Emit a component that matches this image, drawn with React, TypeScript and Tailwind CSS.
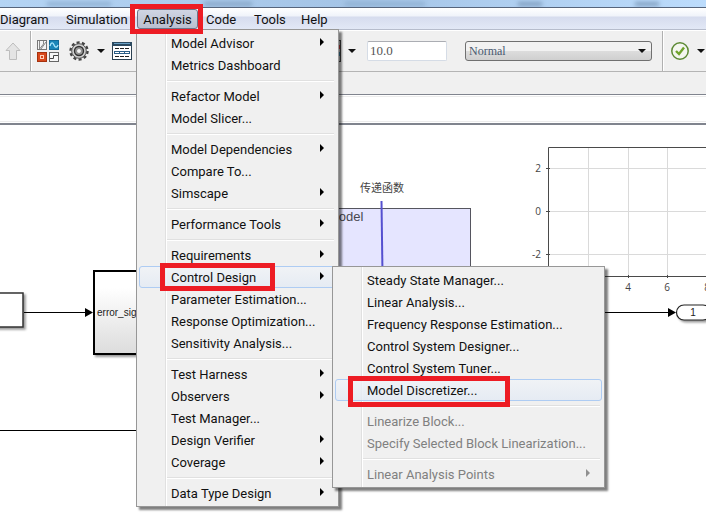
import type { ReactNode } from "react";

type Entry = {
  label?: string;
  arrow?: boolean;
  disabled?: boolean;
  active?: boolean;
  mark?: ReactNode;
  submenu?: Entry[];
};

const SEPARATOR: Entry = {};

const controlDesign: Entry[] = [
  { label: "Steady State Manager..." },
  { label: "Linear Analysis..." },
  { label: "Frequency Response Estimation..." },
  { label: "Control System Designer..." },
  { label: "Control System Tuner..." },
  {
    label: "Model Discretizer...",
    active: true,
    mark: <Mark className="left-[13px] -top-[3px] h-[31px] w-[162px]" />,
  },
  SEPARATOR,
  { label: "Linearize Block...", disabled: true },
  { label: "Specify Selected Block Linearization...", disabled: true },
  SEPARATOR,
  { label: "Linear Analysis Points", disabled: true, arrow: true },
];

const analysis: Entry[] = [
  { label: "Model Advisor", arrow: true },
  { label: "Metrics Dashboard" },
  SEPARATOR,
  { label: "Refactor Model", arrow: true },
  { label: "Model Slicer..." },
  SEPARATOR,
  { label: "Model Dependencies", arrow: true },
  { label: "Compare To..." },
  { label: "Simscape", arrow: true },
  SEPARATOR,
  { label: "Performance Tools", arrow: true },
  SEPARATOR,
  { label: "Requirements", arrow: true },
  {
    label: "Control Design",
    arrow: true,
    active: true,
    mark: <Mark className="left-[21px] -top-[3px] h-[28px] w-[115px]" />,
    submenu: controlDesign,
  },
  { label: "Parameter Estimation..." },
  { label: "Response Optimization..." },
  { label: "Sensitivity Analysis..." },
  SEPARATOR,
  { label: "Test Harness", arrow: true },
  { label: "Observers", arrow: true },
  { label: "Test Manager..." },
  { label: "Design Verifier", arrow: true },
  { label: "Coverage", arrow: true },
  SEPARATOR,
  { label: "Data Type Design", arrow: true },
];

/* Red frame that calls out one step of the click path. */
function Mark({ className }: { className: string }) {
  return (
    <span
      aria-hidden="true"
      className={`pointer-events-none absolute z-30 border-5 border-[#ed1c24] ${className}`}
    />
  );
}

function Menu({ entries, className, label }: { entries: Entry[]; className: string; label: string }) {
  return (
    <ul
      aria-label={label}
      className={`absolute border border-[#979797] bg-[#f0f0f0] bg-[linear-gradient(90deg,transparent_28px,#e0e0e0_28px,#e0e0e0_29px,#ffffff_29px,#ffffff_30px,transparent_30px)] p-[2px] shadow-[3px_3px_2px_rgba(0,0,0,0.5)] ${className}`}
    >
      {entries.map((e, i) =>
        e.label ? (
          <li key={i} className="relative">
            <button
              type="button"
              disabled={e.disabled}
              className={`flex h-[22px] w-full items-center rounded-[3px] border pt-[2px] pl-[31px] pr-[11px] text-left text-[13px] leading-4 whitespace-nowrap ${
                e.active
                  ? "border-[#aeccf3] bg-linear-to-b from-[#f0f3f7]/80 to-[#e3eaf4]/80"
                  : "border-transparent"
              } ${e.disabled ? "text-[#808080]" : "text-[#111111]"}`}
            >
              <span className="flex-1">{e.label}</span>
              {e.arrow && (
                <svg width="4" height="8" viewBox="0 0 4 8" className="-mt-1">
                  <path d="M0 0L4 4L0 8Z" fill={e.disabled ? "#909090" : "#000"} />
                </svg>
              )}
            </button>
            {e.submenu && (
              <Menu
                entries={e.submenu}
                label={e.label}
                className="left-[193px] top-0 z-20 w-[273px]"
              />
            )}
            {e.mark}
          </li>
        ) : (
          <li key={i} role="separator" className="flex h-[9px] items-center pl-7 pr-[2px]">
            <span className="h-[2px] flex-1 border-t border-[#e0e0e0] bg-white" />
          </li>
        ),
      )}
    </ul>
  );
}

function MenuBar() {
  const tab = "h-5 px-2 pt-[2px] text-left text-[13px] leading-[18px] text-[#111111]";
  return (
    <nav className="relative z-20 flex h-[22px] items-end border-b border-[#b6bccc] bg-[linear-gradient(#ffffff_0,#f0f3fa_8px,#d6dcee_9px,#e2e8f6_21px)]">
      <button type="button" className={`${tab} -ml-2 w-[66px]`}>Diagram</button>
      <button type="button" className={`${tab} w-[79px]`}>Simulation</button>
      <div className="relative w-[61px]">
        <button
          type="button"
          className="block h-5 w-full rounded-[3px] border border-[#6c7488] bg-linear-to-b from-[#d0d5e3] to-[#b9bfd0] pt-[2px] text-[13px] leading-4 text-[#111111]"
        >
          Analysis
        </button>
        <Menu entries={analysis} label="Analysis" className="-left-px top-5 w-[203px]" />
        <Mark className="-left-[7px] -top-[5px] h-[30px] w-[73px]" />
      </div>
      <button type="button" className={`${tab} w-[48px]`}>Code</button>
      <button type="button" className={`${tab} w-[47px]`}>Tools</button>
      <button type="button" className={`${tab} w-[44px]`}>Help</button>
    </nav>
  );
}

function Caret() {
  return (
    <svg width="8" height="4" viewBox="0 0 8 4" className="shrink-0">
      <path d="M0 0H8L4 4Z" fill="#111" />
    </svg>
  );
}

function LibraryIcon() {
  return (
    <svg width="22" height="22" viewBox="0 0 22 22">
      <rect x="0.5" y="0.5" width="9" height="9" fill="#f4f4f4" stroke="#777" />
      <path d="M2.5 1V9M2.5 9L6.5 4V1M4 9L9 2" fill="none" stroke="#888" />
      <rect x="12.5" y="0.5" width="9" height="9" fill="#1c86b8" stroke="#126a98" />
      <path d="M13 6C14 2 16 2 17 5S20 8 21 5" fill="none" stroke="#a8e4fa" strokeWidth="1.3" />
      <rect x="0.5" y="12.5" width="9" height="9" fill="#d8481c" stroke="#a6320e" />
      <rect x="3.5" y="15.5" width="3" height="3" fill="#d8481c" stroke="#ffd0b8" />
      <rect x="12.5" y="12.5" width="9" height="9" fill="#f6f6f6" stroke="#666" />
      <path d="M13 18.5H16.5V15.5H21" fill="none" stroke="#444" />
    </svg>
  );
}

function GearIcon() {
  return (
    <svg width="20" height="20" viewBox="0 0 20 20">
      <circle cx="10" cy="10" r="8.5" fill="none" stroke="#444" strokeWidth="2.4" strokeDasharray="3 2.34" />
      <circle cx="10" cy="10" r="7.3" fill="#d0d0d0" stroke="#555" strokeWidth="1" />
      <circle cx="10" cy="10" r="4.5" fill="#999" stroke="#333" strokeWidth="1.4" />
      <circle cx="10" cy="10" r="2.5" fill="#f5f5f5" stroke="#888" />
    </svg>
  );
}

function ExplorerIcon() {
  return (
    <svg width="20" height="18" viewBox="0 0 20 18">
      <rect x="0.5" y="0.5" width="19" height="17" fill="#fff" stroke="#2c4152" />
      <path d="M0 0H20V4H0Z" fill="#2c4a60" />
      <path d="M2 1.5H18" stroke="#6aa0c4" />
      <path d="M3 6.5H17M3 14.5H17" stroke="#222" strokeDasharray="4 1" />
      <rect x="2" y="9" width="16" height="3" fill="#2d5f87" />
      <path d="M3 10.5H17" stroke="#fff" strokeDasharray="4 1" />
    </svg>
  );
}

function ToolBar() {
  return (
    <div className="flex h-[42px] items-center border-t border-b border-t-white border-b-[#b4b4b4] bg-[#f0f0f0] pl-[5px]">
      <button type="button" aria-label="Up to parent" className="w-4">
        <svg width="16" height="18" viewBox="0 0 16 18">
          <path d="M8 1L15 8.5H11.5V17.5H4.5V8.5H1Z" fill="#e4e4e4" stroke="#bdbdbd" />
        </svg>
      </button>
      <span className="ml-[9px] h-full w-[2px] border-l border-[#b0b0b0] bg-white" />
      <button type="button" aria-label="Library browser" className="ml-[5px]"><LibraryIcon /></button>
      <button type="button" aria-label="Model configuration" className="ml-[10px]"><GearIcon /></button>
      <button type="button" aria-label="Configuration options" className="ml-2"><Caret /></button>
      <button type="button" aria-label="Model explorer" className="ml-[7px]"><ExplorerIcon /></button>
      <button type="button" aria-label="Data inspector" className="ml-[187px]">
        <svg width="22" height="22" viewBox="0 0 22 22">
          <rect x="0.5" y="0.5" width="21" height="21" fill="#c8c8c8" stroke="#444" />
          <path d="M20 5V9" stroke="#c44" strokeWidth="2" />
          <path d="M20 12V16" stroke="#48a" strokeWidth="2" />
        </svg>
      </button>
      <button type="button" aria-label="Inspector options" className="ml-[7px]"><Caret /></button>
      <input
        aria-label="Simulation stop time"
        defaultValue="10.0"
        className="ml-[11px] h-5 w-20 shrink-0 rounded-[2px] border border-[#d5dce6] border-t-[#abadb3] bg-white px-[2px] font-['Liberation_Serif',serif] text-[13px] text-[#555555]"
      />
      <div className="relative ml-[18px] shrink-0">
        <select
          aria-label="Simulation mode"
          defaultValue="Normal"
          className="block h-5 w-[187px] appearance-none rounded-[3px] border border-[#707070] bg-[linear-gradient(#f2f2f2_50%,#dddddd_50%,#cfcfcf)] px-[3px] font-['Liberation_Serif',serif] text-[12px] leading-[18px] text-[#4a5a70]"
        >
          <option>Normal</option>
          <option>Accelerator</option>
        </select>
        <span className="pointer-events-none absolute right-[6px] top-2"><Caret /></span>
      </div>
      <span className="ml-[10px] h-full w-[2px] shrink-0 border-l border-[#b0b0b0] bg-white" />
      <button type="button" aria-label="Advisor check" className="ml-[7px] shrink-0">
        <svg width="18" height="18" viewBox="0 0 18 18">
          <circle cx="9" cy="9" r="8.2" fill="#f4f6f0" stroke="#5d8a35" strokeWidth="1.5" />
          <path d="M5 9L8 12L13 5.5" fill="none" stroke="#6fa32c" strokeWidth="2.4" />
        </svg>
      </button>
      <button type="button" aria-label="Advisor options" className="ml-2 shrink-0"><Caret /></button>
    </div>
  );
}

function Diagram() {
  return (
    <svg className="block h-full w-full font-['Liberation_Sans',sans-serif]">
      <defs>
        <linearGradient id="block" x1="0" y1="0" x2="0" y2="1">
          <stop offset="0.2" stopColor="#ffffff" />
          <stop offset="1" stopColor="#dcdcdc" />
        </linearGradient>
        <filter id="soft" x="-20%" y="-20%" width="150%" height="150%">
          <feDropShadow dx="2" dy="2" stdDeviation="1.2" floodColor="#000" floodOpacity="0.4" />
        </filter>
      </defs>

      <rect x="-20" y="168" width="43" height="34" fill="#fff" stroke="#333" strokeWidth="1.5" filter="url(#soft)" />
      <path d="M24 187.5H88M0 305.5H140M600 187.5H670" stroke="#000" />
      <path d="M85 183L93 187.5L85 192ZM668 183L676 187.5L668 192Z" fill="#000" />
      <rect x="94" y="146" width="80" height="83" fill="url(#block)" stroke="#000" strokeWidth="2" filter="url(#soft)" />
      <text x="97" y="191" fontSize="10" fill="#222">error_signal</text>

      <rect x="300.5" y="83.5" width="170" height="120" fill="#e5e5ff" stroke="#55555f" />
      <text x="328" y="96" fontSize="13" fill="#484850">Model</text>
      <path d="M381.5 76L382.5 150" stroke="#5550d0" strokeWidth="2" />
      <text x="360" y="67" fontSize="11" fill="#444" className="font-['Noto_Sans_CJK_SC',sans-serif]">传递函数</text>

      <path d="M588.5 23V151M628.5 23V151M667.5 23V151M548 43.5H900M548 86.5H900M548 129.5H900" stroke="#dadada" />
      <path d="M900 22.5H548.5V151.5H900M546 43.5H550M546 86.5H550M546 129.5H550M628.5 150V153M667.5 150V153" fill="none" stroke="#4a4a4a" />
      <g fontSize="10" fill="#444" className="font-['Open_Sans',sans-serif]">
        <text x="541" y="47" textAnchor="end">2</text>
        <text x="541" y="90" textAnchor="end">0</text>
        <text x="541" y="133" textAnchor="end">-2</text>
        <text x="628" y="166" textAnchor="middle">4</text>
        <text x="667" y="166" textAnchor="middle">6</text>
        <text x="707" y="166" textAnchor="middle">8</text>
      </g>
      <rect x="676.5" y="180" width="34" height="15" rx="7.5" fill="#fff" stroke="#222" strokeWidth="1.2" filter="url(#soft)" />
      <text x="693" y="191" fontSize="10" textAnchor="middle" fill="#222">1</text>
    </svg>
  );
}

export default function App() {
  return (
    <div className="flex h-screen flex-col overflow-hidden bg-white font-['Roboto','Noto_Sans_CJK_SC',sans-serif]">
      <div className="flex h-2 shrink-0 items-center justify-around overflow-hidden border-b border-[#56657c] bg-linear-to-r from-[#b4d4f4] via-[#a4c4e6] to-[#bcdcfc]">
        <span className="h-1 w-16 bg-[#8fb0d2] blur-[2px]" />
        <span className="h-1 w-12 bg-[#86a5c6] blur-[2px]" />
        <span className="h-1 w-20 bg-[#8fb0d2] blur-[2px]" />
        <span className="h-1 w-6 bg-[#7f9dbd] blur-[2px]" />
        <span className="h-1 w-6 bg-[#7f9dbd] blur-[2px]" />
      </div>
      <MenuBar />
      <ToolBar />
      <div className="h-[23px] shrink-0 border-b border-[#80848e] bg-[#f0f0f0]" />
      <div className="h-[30px] shrink-0 border-b-2 border-[#80848e] bg-white py-px">
        <div className="h-full border-y border-[#ececec]" />
      </div>
      <main className="min-h-0 flex-1">
        <Diagram />
      </main>
    </div>
  );
}
